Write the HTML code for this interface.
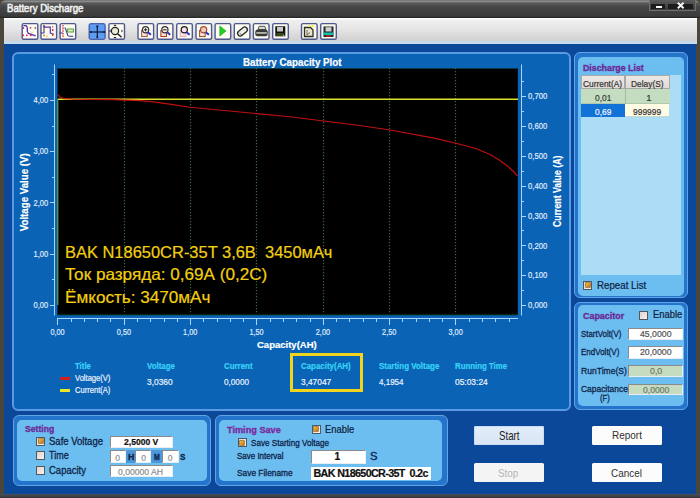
<!DOCTYPE html><html><head><meta charset="utf-8"><style>
*{margin:0;padding:0;box-sizing:border-box}
html,body{width:700px;height:498px;overflow:hidden;background:#4a463c;font-family:"Liberation Sans",sans-serif}
.a{position:absolute}
.t{position:absolute;white-space:nowrap;line-height:1;transform-origin:0 0;-webkit-text-stroke:0.2px currentColor}
#title{left:0;top:0;width:700px;height:18px;background:linear-gradient(#707070 0px,#8a8a8a 1.5px,#5a5a5a 3px,#454545 7px,#3c3c3c 16px,#222 18px);border-radius:6px 6px 0 0}
#tool{left:4px;top:18px;width:692.5px;height:26px;background:linear-gradient(#fff 0,#fff 1px,#efefef 2px,#e6e6e6 11px,#d8d8d8 18px,#d2d2d2 23px,#c4dbea 23.5px,#c4dbea 26px)}
#body{left:4.4px;top:44px;width:692px;height:450px;background:#0c4899}
.pnl{border:2px solid #5a9ae2;background:#0b63b6;border-radius:6px}
.lp{border:1px solid #62a4e8;background:#2474cc;border-radius:6px}
.li{background:#6cbdf0;border-radius:5px}
.ib{position:absolute;background:#fff;border-top:1px solid #8a8a8a;border-left:1px solid #8a8a8a;border-right:1px solid #e8eef4;border-bottom:1px solid #e8eef4}
.cb{position:absolute;width:9px;height:9px;border:1px solid #505860;background:linear-gradient(135deg,#e0d4cc,#faf2ec)}
.cb.on::after{content:"";position:absolute;left:1.5px;top:1.5px;width:4px;height:4px;background:linear-gradient(135deg,#f0c040,#c87010);box-shadow:0 0 0 0.7px #906020}
.btn{position:absolute;border-radius:1.5px}
.icon{position:absolute;top:23px;width:17px;height:17px;border:1.5px solid #6a78b0;border-radius:2px;background:#fbfbf2}
</style></head><body>
<div class="a" id="title"></div>
<div class="t" style="left:6.5px;top:3.25px;font-size:11.05px;color:#f4f4f4;transform:scaleX(0.871);text-shadow:0 0 2px #999;-webkit-text-stroke:0.45px currentColor;">Battery Discharge</div>
<div class="a" style="left:649px;top:-1px;width:47px;height:11.5px;border:1px solid #707070;background:linear-gradient(#5a5a5a,#3a3a3a)"></div>
<div class="a" style="left:651px;top:3.5px;width:14px;height:5.5px;background:#1c1c1c"></div>
<div class="a" style="left:668px;top:3.5px;width:25px;height:5.5px;background:#1c1c1c"></div>
<div class="a" style="left:655.9px;top:5.6px;width:6.4px;height:2.5px;background:#f4f4f4"></div>
<svg class="a" style="left:0;top:0" width="700" height="12"><path d="M677.8 2.8 L683.6 8.2 M683.6 2.8 L677.8 8.2" stroke="#f8f8f8" stroke-width="1.9"/></svg>
<div class="a" id="tool"></div>
<svg class="a" style="left:0;top:0" width="700" height="50" viewBox="0 0 700 50">
<rect x="22.2" y="23.6" width="15.6" height="15.7" rx="1.5" fill="#fbfbf0" stroke="#4f5890" stroke-width="1.4"/>
<rect x="41.0" y="23.6" width="15.6" height="15.7" rx="1.5" fill="#fbfbf0" stroke="#4f5890" stroke-width="1.4"/>
<rect x="60.1" y="23.6" width="15.6" height="15.7" rx="1.5" fill="#fbfbf0" stroke="#4f5890" stroke-width="1.4"/>
<rect x="89.25" y="23.75" width="15.8" height="15.5" rx="2" fill="#5c9cf0" stroke="#4a64b0" stroke-width="1.5"/>
<rect x="108.9" y="23.6" width="15.6" height="15.7" rx="1.5" fill="#fbfbf0" stroke="#4f5890" stroke-width="1.4"/>
<rect x="138.0" y="23.6" width="15.6" height="15.7" rx="1.5" fill="#fbfbf0" stroke="#4f5890" stroke-width="1.4"/>
<rect x="157.29999999999998" y="23.6" width="15.6" height="15.7" rx="1.5" fill="#fbfbf0" stroke="#4f5890" stroke-width="1.4"/>
<rect x="176.7" y="23.6" width="15.6" height="15.7" rx="1.5" fill="#fbfbf0" stroke="#4f5890" stroke-width="1.4"/>
<rect x="196.0" y="23.6" width="15.6" height="15.7" rx="1.5" fill="#fbfbf0" stroke="#4f5890" stroke-width="1.4"/>
<rect x="215.1" y="23.6" width="15.6" height="15.7" rx="1.5" fill="#fbfbf0" stroke="#4f5890" stroke-width="1.4"/>
<rect x="234.29999999999998" y="23.6" width="15.6" height="15.7" rx="1.5" fill="#fbfbf0" stroke="#4f5890" stroke-width="1.4"/>
<rect x="253.39999999999998" y="23.6" width="15.6" height="15.7" rx="1.5" fill="#fbfbf0" stroke="#4f5890" stroke-width="1.4"/>
<rect x="272.7" y="23.6" width="15.6" height="15.7" rx="1.5" fill="#fbfbf0" stroke="#4f5890" stroke-width="1.4"/>
<rect x="301.5" y="23.6" width="15.6" height="15.7" rx="1.5" fill="#fafae8" stroke="#4f5890" stroke-width="1.4"/>
<rect x="320.7" y="23.6" width="15.6" height="15.7" rx="1.5" fill="#fafae8" stroke="#4f5890" stroke-width="1.4"/>
<path d="M23.3 25.6 L26 25.6 Q27.3 26 27.3 28.5 L27.3 31.5 Q27.6 33.6 30 33.8 L35.6 35.8" fill="none" stroke="#5a28b8" stroke-width="1.3"/>
<circle cx="23.3" cy="35.3" r="0.9" fill="#e01840"/>
<circle cx="26.8" cy="35.3" r="0.9" fill="#e01860"/>
<circle cx="30.8" cy="35.3" r="0.9" fill="#d01850"/>
<circle cx="23.3" cy="28" r="0.9" fill="#a04050"/>
<circle cx="30.5" cy="27.8" r="0.9" fill="#b04050"/>
<circle cx="35.3" cy="28" r="0.9" fill="#a06060"/>
<circle cx="32" cy="32.5" r="0.9" fill="#f0e060"/>
<path d="M40.8 33 L44 33 M44 26 L44 33 M44 27.2 L50.3 27.2 L50.3 33 L53.8 34.3" fill="none" stroke="#5a30a8" stroke-width="1.2"/>
<circle cx="44" cy="26" r="0.9" fill="#603040"/>
<circle cx="44" cy="30" r="0.9" fill="#c0a030"/>
<circle cx="44" cy="35.5" r="0.9" fill="#c08020"/>
<circle cx="52.7" cy="26.8" r="0.9" fill="#d08040"/>
<circle cx="52.7" cy="30" r="0.9" fill="#c02040"/>
<circle cx="52.7" cy="35" r="0.9" fill="#d04020"/>
<circle cx="47" cy="36.5" r="0.9" fill="#f0c080"/>
<line x1="63" y1="25" x2="63" y2="38" stroke="#e02040" stroke-width="1.3" stroke-dasharray="1.6 1"/>
<path d="M59.5 33 L62.5 33 M64.6 27.6 Q66 28.5 66.3 31 L67.8 35.5 Q68.5 36.3 70 36.3 L73.2 36.3" fill="none" stroke="#303a90" stroke-width="1.1"/>
<rect x="67.6" y="29" width="5.8" height="3" fill="#e0f0c0" stroke="#58a038" stroke-width="1"/>
<line x1="97.3" y1="26.5" x2="97.3" y2="37" stroke="#101840" stroke-width="1.2"/><line x1="90.5" y1="32" x2="104.5" y2="32" stroke="#101840" stroke-width="1.2"/>
<circle cx="97.3" cy="26.3" r="1.1" fill="#101840"/>
<circle cx="97.3" cy="37.3" r="1.1" fill="#101840"/>
<circle cx="90.8" cy="32" r="1.1" fill="#101840"/>
<circle cx="104.2" cy="32" r="1.1" fill="#101840"/>
<path d="M89.5 25 h16 M89.5 38 h16" stroke="#8ab8f8" stroke-width="0.6" opacity="0.5"/>
<circle cx="115" cy="31" r="3.6" fill="#e8ecd8" stroke="#202020" stroke-width="1.2"/><line x1="117.6" y1="33.7" x2="121.5" y2="37.3" stroke="#202020" stroke-width="1.5"/>
<path d="M113.5 26 L115 24.5 L116.5 26Z M113.5 37 L115 38.5 L116.5 37Z M110.5 29.5 L109.2 31 L110.5 32.5Z M121.5 29.5 L122.8 31 L121.5 32.5Z" fill="#101010"/>
<rect x="141.60000000000002" y="30.5" width="5.6" height="6" fill="#f6ece4" stroke="#a06048" stroke-width="1.1"/><circle cx="145.60000000000002" cy="29.8" r="3.1" fill="#f8f4f0" stroke="#383030" stroke-width="1.2"/><line x1="147.90000000000003" y1="32.2" x2="150.90000000000003" y2="34.8" stroke="#3030c8" stroke-width="2"/><path d="M144.00000000000003 29.8 h3.2 M145.60000000000002 28.2 v3.2" stroke="#202020" stroke-width="1"/>
<rect x="160.9" y="30.5" width="5.6" height="6" fill="#f6ece4" stroke="#c03818" stroke-width="1.1"/><circle cx="164.9" cy="29.8" r="3.1" fill="#f8f4f0" stroke="#383030" stroke-width="1.2"/><line x1="167.20000000000002" y1="32.2" x2="170.20000000000002" y2="34.8" stroke="#3030c8" stroke-width="2"/><path d="M163.20000000000002 29.8 h3.4" stroke="#202020" stroke-width="1.1"/>
<rect x="180.3" y="30.5" width="5.6" height="6" fill="#f6ece4" stroke="#e8b0c0" stroke-width="1.1"/><circle cx="184.3" cy="29.8" r="3.1" fill="#f4e0f0" stroke="#201818" stroke-width="1.2"/><line x1="186.60000000000002" y1="32.2" x2="189.60000000000002" y2="34.8" stroke="#3030c8" stroke-width="2"/>
<rect x="199.60000000000002" y="30.5" width="5.6" height="6" fill="#f6ece4" stroke="#a05030" stroke-width="1.1"/><circle cx="203.60000000000002" cy="29.8" r="3.1" fill="#e8d0c0" stroke="#b04828" stroke-width="1.2"/><line x1="205.90000000000003" y1="32.2" x2="208.90000000000003" y2="34.8" stroke="#3030c8" stroke-width="2"/>
<path d="M219.8 26 L226 31 L219.8 36Z" fill="#20d020" stroke="#10a010" stroke-width="0.6"/>
<rect x="237" y="28.8" width="11" height="5.4" rx="2.7" transform="rotate(-40 242.5 31.5)" fill="#f0eee6" stroke="#282828" stroke-width="1.3"/>
<path d="M239.6 33.2 L242.6 35.6" stroke="#505050" stroke-width="0.8"/>
<path d="M258 29.5 L259.2 26.3 L264.8 26.3 L266 29.5Z" fill="#d8d8d8" stroke="#505050" stroke-width="1"/>
<rect x="255.3" y="29.5" width="12.4" height="6.8" rx="2.5" fill="#383838"/><rect x="256.3" y="32.3" width="10.4" height="1.3" fill="#e8e8d8"/>
<rect x="275.3" y="26.3" width="10" height="10" fill="#101010"/><rect x="277" y="27" width="6" height="4.5" fill="#c8c8c8"/><rect x="276.5" y="33" width="7.5" height="3" fill="#384818"/><circle cx="283.8" cy="35.3" r="0.6" fill="#fff"/>
<path d="M304.5 27.5 L310.5 27.5 L313 30 L313 36.5 L304.5 36.5Z" fill="#e8e4d0" stroke="#303020" stroke-width="1.3"/><path d="M307 30 v5 l3 -2.5" fill="none" stroke="#606050" stroke-width="0.9"/>
<circle cx="312.5" cy="26" r="1.2" fill="#f0f030"/><circle cx="309" cy="26" r="0.9" fill="#f0f060"/>
<rect x="323.5" y="26.5" width="10" height="10.5" fill="#202830"/><rect x="325.5" y="27.2" width="6" height="4.3" fill="#d0d0d0"/><rect x="323.5" y="32.5" width="10" height="2.5" fill="#10c0a8"/><rect x="326" y="35" width="5" height="2" fill="#a02020"/>
</svg>
<div class="a" id="body"></div>
<div class="a pnl" style="left:12px;top:51.5px;width:559px;height:359px"></div>
<svg class="a" style="left:0;top:0" width="700" height="498" viewBox="0 0 700 498"><style>.ax{font-family:"Liberation Sans",sans-serif;font-size:8.8px;fill:#e4f2ff;stroke:#e4f2ff;stroke-width:0.15px}</style><rect x="57.5" y="68" width="460.3" height="247.2" fill="#000"/>
<line x1="57.5" y1="68.5" x2="517.8" y2="68.5" stroke="#0a3a48" stroke-width="1"/>
<line x1="57.5" y1="314.5" x2="518" y2="314.5" stroke="#0c280c" stroke-width="1"/>
<line x1="124.5" y1="68" x2="124.5" y2="314" stroke="#3c643c" stroke-width="1.2" stroke-dasharray="1.2 1.8"/>
<line x1="190.5" y1="68" x2="190.5" y2="314" stroke="#3c643c" stroke-width="1.2" stroke-dasharray="1.2 1.8"/>
<line x1="256.5" y1="68" x2="256.5" y2="314" stroke="#3c643c" stroke-width="1.2" stroke-dasharray="1.2 1.8"/>
<line x1="323.5" y1="68" x2="323.5" y2="314" stroke="#3c643c" stroke-width="1.2" stroke-dasharray="1.2 1.8"/>
<line x1="389.5" y1="68" x2="389.5" y2="314" stroke="#3c643c" stroke-width="1.2" stroke-dasharray="1.2 1.8"/>
<line x1="455.5" y1="68" x2="455.5" y2="314" stroke="#3c643c" stroke-width="1.2" stroke-dasharray="1.2 1.8"/>
<line x1="54.5" y1="64.5" x2="54.5" y2="315.5" stroke="#a8d4ff" stroke-width="1"/>
<line x1="50" y1="305.5" x2="54.5" y2="305.5" stroke="#a8d4ff" stroke-width="1"/>
<line x1="52" y1="279.5" x2="54.5" y2="279.5" stroke="#a8d4ff" stroke-width="1"/>
<line x1="50" y1="254.5" x2="54.5" y2="254.5" stroke="#a8d4ff" stroke-width="1"/>
<line x1="52" y1="228.5" x2="54.5" y2="228.5" stroke="#a8d4ff" stroke-width="1"/>
<line x1="50" y1="202.5" x2="54.5" y2="202.5" stroke="#a8d4ff" stroke-width="1"/>
<line x1="52" y1="177.5" x2="54.5" y2="177.5" stroke="#a8d4ff" stroke-width="1"/>
<line x1="50" y1="151.5" x2="54.5" y2="151.5" stroke="#a8d4ff" stroke-width="1"/>
<line x1="52" y1="126.5" x2="54.5" y2="126.5" stroke="#a8d4ff" stroke-width="1"/>
<line x1="50" y1="100.5" x2="54.5" y2="100.5" stroke="#a8d4ff" stroke-width="1"/>
<line x1="52" y1="74.5" x2="54.5" y2="74.5" stroke="#a8d4ff" stroke-width="1"/>
<text x="48.2" y="308.2" text-anchor="end" textLength="14.6" lengthAdjust="spacingAndGlyphs" class="ax">0,00</text>
<text x="48.2" y="256.9" text-anchor="end" textLength="14.6" lengthAdjust="spacingAndGlyphs" class="ax">1,00</text>
<text x="48.2" y="205.7" text-anchor="end" textLength="14.6" lengthAdjust="spacingAndGlyphs" class="ax">2,00</text>
<text x="48.2" y="154.4" text-anchor="end" textLength="14.6" lengthAdjust="spacingAndGlyphs" class="ax">3,00</text>
<text x="48.2" y="103.2" text-anchor="end" textLength="14.6" lengthAdjust="spacingAndGlyphs" class="ax">4,00</text>
<line x1="521.5" y1="64.5" x2="521.5" y2="315.5" stroke="#a8d4ff" stroke-width="1"/>
<line x1="521.5" y1="305.5" x2="526" y2="305.5" stroke="#a8d4ff" stroke-width="1"/>
<line x1="521.5" y1="290.5" x2="524" y2="290.5" stroke="#a8d4ff" stroke-width="1"/>
<line x1="521.5" y1="275.5" x2="526" y2="275.5" stroke="#a8d4ff" stroke-width="1"/>
<line x1="521.5" y1="260.5" x2="524" y2="260.5" stroke="#a8d4ff" stroke-width="1"/>
<line x1="521.5" y1="245.5" x2="526" y2="245.5" stroke="#a8d4ff" stroke-width="1"/>
<line x1="521.5" y1="230.5" x2="524" y2="230.5" stroke="#a8d4ff" stroke-width="1"/>
<line x1="521.5" y1="216.5" x2="526" y2="216.5" stroke="#a8d4ff" stroke-width="1"/>
<line x1="521.5" y1="201.5" x2="524" y2="201.5" stroke="#a8d4ff" stroke-width="1"/>
<line x1="521.5" y1="186.5" x2="526" y2="186.5" stroke="#a8d4ff" stroke-width="1"/>
<line x1="521.5" y1="171.5" x2="524" y2="171.5" stroke="#a8d4ff" stroke-width="1"/>
<line x1="521.5" y1="156.5" x2="526" y2="156.5" stroke="#a8d4ff" stroke-width="1"/>
<line x1="521.5" y1="141.5" x2="524" y2="141.5" stroke="#a8d4ff" stroke-width="1"/>
<line x1="521.5" y1="126.5" x2="526" y2="126.5" stroke="#a8d4ff" stroke-width="1"/>
<line x1="521.5" y1="111.5" x2="524" y2="111.5" stroke="#a8d4ff" stroke-width="1"/>
<line x1="521.5" y1="96.5" x2="526" y2="96.5" stroke="#a8d4ff" stroke-width="1"/>
<line x1="521.5" y1="81.5" x2="524" y2="81.5" stroke="#a8d4ff" stroke-width="1"/>
<text x="528" y="308.2" textLength="19.2" lengthAdjust="spacingAndGlyphs" class="ax">0,000</text>
<text x="528" y="278.4" textLength="19.2" lengthAdjust="spacingAndGlyphs" class="ax">0,100</text>
<text x="528" y="248.5" textLength="19.2" lengthAdjust="spacingAndGlyphs" class="ax">0,200</text>
<text x="528" y="218.7" textLength="19.2" lengthAdjust="spacingAndGlyphs" class="ax">0,300</text>
<text x="528" y="188.9" textLength="19.2" lengthAdjust="spacingAndGlyphs" class="ax">0,400</text>
<text x="528" y="159.0" textLength="19.2" lengthAdjust="spacingAndGlyphs" class="ax">0,500</text>
<text x="528" y="129.2" textLength="19.2" lengthAdjust="spacingAndGlyphs" class="ax">0,600</text>
<text x="528" y="99.4" textLength="19.2" lengthAdjust="spacingAndGlyphs" class="ax">0,700</text>
<line x1="57" y1="318.5" x2="518" y2="318.5" stroke="#a8d4ff" stroke-width="1"/>
<line x1="57.5" y1="318.5" x2="57.5" y2="325" stroke="#a8d4ff" stroke-width="1"/>
<line x1="71.5" y1="318.5" x2="71.5" y2="322" stroke="#a8d4ff" stroke-width="1"/>
<line x1="84.5" y1="318.5" x2="84.5" y2="322" stroke="#a8d4ff" stroke-width="1"/>
<line x1="97.5" y1="318.5" x2="97.5" y2="322" stroke="#a8d4ff" stroke-width="1"/>
<line x1="110.5" y1="318.5" x2="110.5" y2="322" stroke="#a8d4ff" stroke-width="1"/>
<line x1="124.5" y1="318.5" x2="124.5" y2="325" stroke="#a8d4ff" stroke-width="1"/>
<line x1="137.5" y1="318.5" x2="137.5" y2="322" stroke="#a8d4ff" stroke-width="1"/>
<line x1="150.5" y1="318.5" x2="150.5" y2="322" stroke="#a8d4ff" stroke-width="1"/>
<line x1="164.5" y1="318.5" x2="164.5" y2="322" stroke="#a8d4ff" stroke-width="1"/>
<line x1="177.5" y1="318.5" x2="177.5" y2="322" stroke="#a8d4ff" stroke-width="1"/>
<line x1="190.5" y1="318.5" x2="190.5" y2="325" stroke="#a8d4ff" stroke-width="1"/>
<line x1="203.5" y1="318.5" x2="203.5" y2="322" stroke="#a8d4ff" stroke-width="1"/>
<line x1="217.5" y1="318.5" x2="217.5" y2="322" stroke="#a8d4ff" stroke-width="1"/>
<line x1="230.5" y1="318.5" x2="230.5" y2="322" stroke="#a8d4ff" stroke-width="1"/>
<line x1="243.5" y1="318.5" x2="243.5" y2="322" stroke="#a8d4ff" stroke-width="1"/>
<line x1="256.5" y1="318.5" x2="256.5" y2="325" stroke="#a8d4ff" stroke-width="1"/>
<line x1="270.5" y1="318.5" x2="270.5" y2="322" stroke="#a8d4ff" stroke-width="1"/>
<line x1="283.5" y1="318.5" x2="283.5" y2="322" stroke="#a8d4ff" stroke-width="1"/>
<line x1="296.5" y1="318.5" x2="296.5" y2="322" stroke="#a8d4ff" stroke-width="1"/>
<line x1="310.5" y1="318.5" x2="310.5" y2="322" stroke="#a8d4ff" stroke-width="1"/>
<line x1="323.5" y1="318.5" x2="323.5" y2="325" stroke="#a8d4ff" stroke-width="1"/>
<line x1="336.5" y1="318.5" x2="336.5" y2="322" stroke="#a8d4ff" stroke-width="1"/>
<line x1="349.5" y1="318.5" x2="349.5" y2="322" stroke="#a8d4ff" stroke-width="1"/>
<line x1="363.5" y1="318.5" x2="363.5" y2="322" stroke="#a8d4ff" stroke-width="1"/>
<line x1="376.5" y1="318.5" x2="376.5" y2="322" stroke="#a8d4ff" stroke-width="1"/>
<line x1="389.5" y1="318.5" x2="389.5" y2="325" stroke="#a8d4ff" stroke-width="1"/>
<line x1="402.5" y1="318.5" x2="402.5" y2="322" stroke="#a8d4ff" stroke-width="1"/>
<line x1="416.5" y1="318.5" x2="416.5" y2="322" stroke="#a8d4ff" stroke-width="1"/>
<line x1="429.5" y1="318.5" x2="429.5" y2="322" stroke="#a8d4ff" stroke-width="1"/>
<line x1="442.5" y1="318.5" x2="442.5" y2="322" stroke="#a8d4ff" stroke-width="1"/>
<line x1="455.5" y1="318.5" x2="455.5" y2="325" stroke="#a8d4ff" stroke-width="1"/>
<line x1="469.5" y1="318.5" x2="469.5" y2="322" stroke="#a8d4ff" stroke-width="1"/>
<line x1="482.5" y1="318.5" x2="482.5" y2="322" stroke="#a8d4ff" stroke-width="1"/>
<line x1="495.5" y1="318.5" x2="495.5" y2="322" stroke="#a8d4ff" stroke-width="1"/>
<line x1="509.5" y1="318.5" x2="509.5" y2="322" stroke="#a8d4ff" stroke-width="1"/>
<text x="50.4" y="334.8" textLength="14.2" lengthAdjust="spacingAndGlyphs" class="ax">0,00</text>
<text x="116.8" y="334.8" textLength="14.2" lengthAdjust="spacingAndGlyphs" class="ax">0,50</text>
<text x="183.1" y="334.8" textLength="14.2" lengthAdjust="spacingAndGlyphs" class="ax">1,00</text>
<text x="249.4" y="334.8" textLength="14.2" lengthAdjust="spacingAndGlyphs" class="ax">1,50</text>
<text x="315.8" y="334.8" textLength="14.2" lengthAdjust="spacingAndGlyphs" class="ax">2,00</text>
<text x="382.1" y="334.8" textLength="14.2" lengthAdjust="spacingAndGlyphs" class="ax">2,50</text>
<text x="448.5" y="334.8" textLength="14.2" lengthAdjust="spacingAndGlyphs" class="ax">3,00</text>
<polyline points="518,99.2 57.8,99.2" fill="none" stroke="#dce428" stroke-width="1.35"/>
<line x1="57.8" y1="99.2" x2="57.8" y2="305" stroke="#70b838" stroke-width="1.1"/>
<polyline points="57.8,94.7 60,97 64,98.6 75,99.2 112,99.6 140,100.6 151.4,101.6 171.4,104.4 190,107.3 257,113.6 290,116.8 325.7,121.3 361.4,125.7 390,130 432.9,137.9 456,143.2 475.7,148.5 490,154.5 500,160.5 508,166.5 513,171 517.5,176" fill="none" stroke="#c01010" stroke-width="1.15"/></svg>
<div class="t" style="left:242.9px;top:57.54px;font-size:10.47px;font-weight:bold;color:#fff;transform:scaleX(0.936);">Battery Capacity Plot</div>
<div class="t" style="left:257.1px;top:340.00px;font-size:9.45px;font-weight:bold;color:#fff;transform:scaleX(1.008);">Capacity(AH)</div>
<div class="t" style="left:-17.6px;top:187.2px;font-size:10.61px;font-weight:bold;color:#fff;transform-origin:50% 50%;transform:rotate(-90deg) scaleX(0.914)">Voltage Value (V)</div>
<div class="t" style="left:513.7px;top:186.4px;font-size:10.61px;font-weight:bold;color:#fff;transform-origin:50% 50%;transform:rotate(-90deg) scaleX(0.823)">Current Value (A)</div>
<div class="t" style="left:64.6px;top:245.05px;font-size:16.72px;color:#f2d010;transform:scaleX(0.985);-webkit-text-stroke:0.2px currentColor;">BAK N18650CR-35T 3,6В &nbsp;3450мАч</div>
<div class="t" style="left:64.6px;top:267.35px;font-size:16.72px;color:#f2d010;transform:scaleX(1.025);-webkit-text-stroke:0.2px currentColor;">Ток разряда: 0,69А (0,2С)</div>
<div class="t" style="left:64.6px;top:289.65px;font-size:16.72px;color:#f2d010;transform:scaleX(1.025);-webkit-text-stroke:0.2px currentColor;">Ёмкость: 3470мАч</div>
<div class="a" style="left:59.5px;top:377px;width:10.5px;height:3px;background:#d02020"></div>
<div class="a" style="left:59.5px;top:389.3px;width:10.5px;height:3px;background:#e8e828"></div>
<div class="t" style="left:74.6px;top:361.67px;font-size:9.01px;font-weight:bold;color:#38d4f8;transform:scaleX(0.866);">Title</div>
<div class="t" style="left:74.6px;top:374.32px;font-size:9.30px;color:#eef4ff;transform:scaleX(0.815);">Voltage(V)</div>
<div class="t" style="left:74.6px;top:385.92px;font-size:9.30px;color:#eef4ff;transform:scaleX(0.815);">Current(A)</div>
<div class="t" style="left:146.6px;top:361.67px;font-size:9.01px;font-weight:bold;color:#38d4f8;transform:scaleX(0.875);">Voltage</div>
<div class="t" style="left:146.6px;top:377.48px;font-size:9.59px;color:#eef4ff;transform:scaleX(0.876);">3,0360</div>
<div class="t" style="left:223.6px;top:361.67px;font-size:9.01px;font-weight:bold;color:#38d4f8;transform:scaleX(0.879);">Current</div>
<div class="t" style="left:223.6px;top:377.48px;font-size:9.59px;color:#eef4ff;transform:scaleX(0.852);">0,0000</div>
<div class="t" style="left:300.8px;top:361.67px;font-size:9.01px;font-weight:bold;color:#38d4f8;transform:scaleX(0.880);">Capacity(AH)</div>
<div class="t" style="left:300.8px;top:377.48px;font-size:9.59px;color:#eef4ff;transform:scaleX(0.871);">3,47047</div>
<div class="t" style="left:378.6px;top:361.67px;font-size:9.01px;font-weight:bold;color:#38d4f8;transform:scaleX(0.883);">Starting Voltage</div>
<div class="t" style="left:378.6px;top:377.48px;font-size:9.59px;color:#eef4ff;transform:scaleX(0.838);">4,1954</div>
<div class="t" style="left:454.6px;top:361.67px;font-size:9.01px;font-weight:bold;color:#38d4f8;transform:scaleX(0.870);">Running Time</div>
<div class="t" style="left:454.6px;top:377.48px;font-size:9.59px;color:#eef4ff;transform:scaleX(0.878);">05:03:24</div>
<div class="a" style="left:290.3px;top:353.4px;width:72.9px;height:38.8px;border:3.3px solid #f2d41c"></div>
<div class="a lp" style="left:574px;top:52px;width:114px;height:246px"></div>
<div class="a li" style="left:578px;top:56.5px;width:106px;height:239px"></div>
<div class="a" style="left:581px;top:75px;width:100px;height:200px;background:#acdcf6"></div>
<div class="a" style="left:581px;top:75px;width:44px;height:14px;background:linear-gradient(#ece8e4,#e0dad6);border:1px solid #a8a8a8"></div>
<div class="a" style="left:624.5px;top:75px;width:45px;height:14px;background:linear-gradient(#ece8e4,#e0dad6);border:1px solid #a8a8a8"></div>
<div class="a" style="left:581px;top:89px;width:88.5px;height:14.7px;background:#c4dcc0;border-bottom:1px solid #b0c8b0"></div>
<div class="a" style="left:624.6px;top:89px;width:1px;height:14.7px;background:#a8b8a8"></div>
<div class="a" style="left:581px;top:103.7px;width:43.6px;height:13.8px;background:#1272d6"></div>
<div class="a" style="left:624.6px;top:103.7px;width:44.9px;height:13.8px;background:#fffbe4;border-bottom:1px solid #c8d8c8"></div>
<div class="t" style="left:583.3px;top:63.20px;font-size:9.45px;font-weight:bold;color:#6a2a98;transform:scaleX(0.934);-webkit-text-stroke:0.35px currentColor;">Discharge List</div>
<div class="t" style="left:583.3px;top:79.20px;font-size:9.45px;color:#303030;transform:scaleX(0.887);">Current(A)</div>
<div class="t" style="left:631.4px;top:79.20px;font-size:9.45px;color:#303030;transform:scaleX(0.887);">Delay(S)</div>
<div class="t" style="left:594.7px;top:92.80px;font-size:9.45px;color:#303830;transform:scaleX(0.887);">0,01</div>
<div class="t" style="left:646.2px;top:92.80px;font-size:9.45px;color:#303830;">1</div>
<div class="t" style="left:594.7px;top:107.00px;font-size:9.45px;color:#f4f8ff;transform:scaleX(0.887);">0,69</div>
<div class="t" style="left:633.3px;top:107.00px;font-size:9.45px;color:#303030;transform:scaleX(0.895);">999999</div>
<div class="cb on" style="left:583.4px;top:280.8px"></div>
<div class="t" style="left:596.6px;top:280.42px;font-size:10.61px;color:#10203a;transform:scaleX(0.917);">Repeat List</div>
<div class="a lp" style="left:574px;top:302px;width:114px;height:108px"></div>
<div class="a li" style="left:578px;top:305px;width:106px;height:100.5px"></div>
<div class="t" style="left:582.8px;top:310.90px;font-size:9.45px;font-weight:bold;color:#6a2a98;transform:scaleX(0.946);-webkit-text-stroke:0.35px currentColor;">Capacitor</div>
<div class="cb" style="left:639.2px;top:311.3px"></div>
<div class="t" style="left:652.5px;top:310.29px;font-size:10.17px;color:#10203a;transform:scaleX(0.928);">Enable</div>
<div class="t" style="left:580.9px;top:328.95px;font-size:9.74px;color:#0e2448;transform:scaleX(0.811);-webkit-text-stroke:0.3px currentColor;">StartVolt(V)</div>
<div class="t" style="left:580.9px;top:347.15px;font-size:9.74px;color:#0e2448;transform:scaleX(0.823);-webkit-text-stroke:0.3px currentColor;">EndVolt(V)</div>
<div class="t" style="left:580.9px;top:366.15px;font-size:9.74px;color:#0e2448;transform:scaleX(0.881);-webkit-text-stroke:0.3px currentColor;">RunTime(S)</div>
<div class="t" style="left:580.9px;top:383.75px;font-size:9.74px;color:#0e2448;transform:scaleX(0.866);-webkit-text-stroke:0.3px currentColor;">Capacitance</div>
<div class="t" style="left:599.6px;top:392.95px;font-size:9.74px;color:#0e2448;transform:scaleX(0.788);-webkit-text-stroke:0.3px currentColor;">(F)</div>
<div class="ib" style="left:628.1px;top:328.1px;width:54.6px;height:11.7px"></div>
<div class="ib" style="left:628.1px;top:346.3px;width:54.6px;height:12.3px"></div>
<div class="ib" style="left:628.1px;top:364.8px;width:54.6px;height:11.9px;background:#c6dcc0"></div>
<div class="ib" style="left:628.1px;top:383.7px;width:54.6px;height:11.8px;background:#c6dcc0"></div>
<div class="t" style="left:640.3px;top:329.95px;font-size:9.16px;color:#505050;transform:scaleX(0.952);">45,0000</div>
<div class="t" style="left:640.3px;top:348.35px;font-size:9.16px;color:#505050;transform:scaleX(0.952);">20,0000</div>
<div class="t" style="left:650.1px;top:367.15px;font-size:9.16px;color:#707868;transform:scaleX(0.959);">0,0</div>
<div class="t" style="left:642.8px;top:385.65px;font-size:9.16px;color:#707868;transform:scaleX(0.943);">0,0000</div>
<div class="a lp" style="left:13.3px;top:414.8px;width:197.5px;height:71.6px"></div>
<div class="a li" style="left:17.2px;top:419.6px;width:189.6px;height:61.6px"></div>
<div class="t" style="left:24.9px;top:424.08px;font-size:9.59px;font-weight:bold;color:#6a2a98;transform:scaleX(0.898);-webkit-text-stroke:0.35px currentColor;">Setting</div>
<div class="cb on" style="left:36px;top:436.8px"></div>
<div class="cb" style="left:36px;top:451.3px"></div>
<div class="cb" style="left:36px;top:465.8px"></div>
<div class="t" style="left:49.2px;top:436.76px;font-size:10.32px;color:#0e2448;transform:scaleX(0.923);-webkit-text-stroke:0.3px currentColor;">Safe Voltage</div>
<div class="t" style="left:49.2px;top:451.36px;font-size:10.32px;color:#0e2448;transform:scaleX(0.874);-webkit-text-stroke:0.3px currentColor;">Time</div>
<div class="t" style="left:49.2px;top:465.86px;font-size:10.32px;color:#0e2448;transform:scaleX(0.922);-webkit-text-stroke:0.3px currentColor;">Capacity</div>
<div class="ib" style="left:109.7px;top:435.7px;width:63.2px;height:12.2px"></div>
<div class="t" style="left:123.6px;top:438.42px;font-size:9.30px;font-weight:bold;color:#101010;transform:scaleX(0.921);">2,5000 V</div>
<div class="a" style="left:126px;top:450px;width:9px;height:13px;background:#4c98dc"></div>
<div class="a" style="left:151.4px;top:450px;width:10.6px;height:13px;background:#4c98dc"></div>
<div class="ib" style="left:110px;top:450px;width:15.7px;height:12.9px"></div>
<div class="ib" style="left:135px;top:450px;width:16.4px;height:12.9px"></div>
<div class="ib" style="left:162px;top:450px;width:16.6px;height:12.9px"></div>
<div class="t" style="left:115.2px;top:453.54px;font-size:8.58px;color:#909090;">0</div>
<div class="t" style="left:141.3px;top:453.54px;font-size:8.58px;color:#909090;">0</div>
<div class="t" style="left:167.8px;top:453.54px;font-size:8.58px;color:#909090;">0</div>
<div class="t" style="left:127.9px;top:453.35px;font-size:9.16px;font-weight:bold;color:#0e2448;transform:scaleX(0.968);-webkit-text-stroke:0.3px currentColor;">H</div>
<div class="t" style="left:154.3px;top:453.35px;font-size:9.16px;font-weight:bold;color:#0e2448;transform:scaleX(0.760);-webkit-text-stroke:0.3px currentColor;">M</div>
<div class="t" style="left:180.0px;top:453.35px;font-size:9.16px;font-weight:bold;color:#0e2448;transform:scaleX(0.884);-webkit-text-stroke:0.3px currentColor;">S</div>
<div class="ib" style="left:110px;top:465px;width:62.9px;height:12.1px"></div>
<div class="t" style="left:117.9px;top:467.52px;font-size:8.72px;color:#8a8a8a;transform:scaleX(0.987);">0,00000 AH</div>
<div class="a lp" style="left:215px;top:414.8px;width:232.6px;height:71.6px"></div>
<div class="a li" style="left:219.2px;top:419.6px;width:222.8px;height:61.6px"></div>
<div class="t" style="left:226.5px;top:424.60px;font-size:9.45px;font-weight:bold;color:#7a2aa0;transform:scaleX(0.970);-webkit-text-stroke:0.35px currentColor;">Timing Save</div>
<div class="cb on" style="left:311.5px;top:424.8px"></div>
<div class="t" style="left:324.6px;top:425.39px;font-size:10.17px;color:#10203a;transform:scaleX(0.928);">Enable</div>
<div class="cb on" style="left:237.6px;top:438.2px"></div>
<div class="t" style="left:250.9px;top:439.32px;font-size:9.30px;color:#0e2448;transform:scaleX(0.872);-webkit-text-stroke:0.3px currentColor;">Save Starting Voltage</div>
<div class="t" style="left:237.1px;top:452.37px;font-size:9.01px;color:#0e2448;transform:scaleX(0.886);-webkit-text-stroke:0.3px currentColor;">Save Interval</div>
<div class="t" style="left:237.1px;top:468.67px;font-size:9.01px;color:#0e2448;transform:scaleX(0.928);-webkit-text-stroke:0.3px currentColor;">Save Filename</div>
<div class="ib" style="left:310.6px;top:450px;width:55px;height:13.6px"></div>
<div class="t" style="left:334.5px;top:451.89px;font-size:10.17px;font-weight:bold;color:#101010;">1</div>
<div class="t" style="left:369.8px;top:451.99px;font-size:10.17px;color:#0e2448;transform:scaleX(1.105);-webkit-text-stroke:0.3px currentColor;">S</div>
<div class="a" style="left:310.6px;top:466.5px;width:120.5px;height:13px;background:#fff"></div>
<div class="t" style="left:313.5px;top:467.69px;font-size:10.76px;font-weight:bold;color:#101010;letter-spacing:-0.644px;">BAK N18650CR-35T &nbsp;0.2c</div>
<div class="btn" style="left:474.3px;top:425.5px;width:69.6px;height:19.6px;background:linear-gradient(#e4eefa,#d8e4f4);box-shadow:inset 0 0 0 1px #c8dcf4"></div>
<div class="t" style="left:498.9px;top:430.61px;font-size:11.92px;color:#202020;transform:scaleX(0.818);-webkit-text-stroke:0;">Start</div>
<div class="btn" style="left:592px;top:425.7px;width:70px;height:19.3px;background:#fcfcfc"></div>
<div class="t" style="left:612.0px;top:430.25px;font-size:11.05px;color:#303030;transform:scaleX(0.902);-webkit-text-stroke:0;">Report</div>
<div class="btn" style="left:474.3px;top:462.9px;width:69.6px;height:19.1px;background:#f4f4f4"></div>
<div class="t" style="left:498.4px;top:467.35px;font-size:11.63px;color:#b4b4b4;transform:scaleX(0.849);-webkit-text-stroke:0;">Stop</div>
<div class="btn" style="left:592px;top:462.8px;width:70px;height:19px;background:#fcfcfc"></div>
<div class="t" style="left:611.4px;top:467.60px;font-size:11.34px;color:#303030;transform:scaleX(0.876);-webkit-text-stroke:0;">Cancel</div>
<div class="a" style="left:0;top:494px;width:700px;height:4px;background:linear-gradient(#4a4e58,#34363c)"></div>
</body></html>
